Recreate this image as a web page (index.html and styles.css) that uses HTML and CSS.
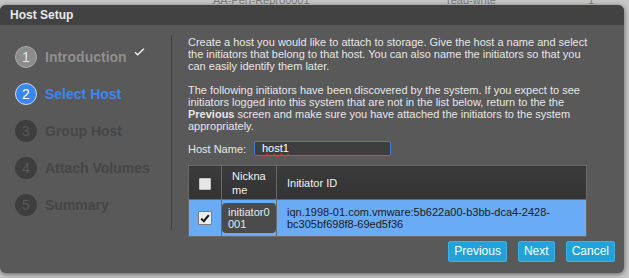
FILE: index.html
```html
<!DOCTYPE html>
<html lang="en">
<head>
<meta charset="utf-8">
<title>Host Setup</title>
<link rel="stylesheet" href="styles.css">
</head>
<body>
<div class="backdrop">
  <div class="bg-row">
    <span class="bg-name">AA-Perf-Repro0001</span>
    <span class="bg-access">read-write</span>
    <span class="bg-lun">1</span>
  </div>
</div>

<div class="dialog">
  <div class="dialog-title">Host Setup</div>
  <div class="dialog-body">
    <ol class="steps">
      <li class="step done"><span class="num">1</span><span class="label">Introduction</span><svg class="tick" width="11" height="8" viewBox="0 0 11 8"><path d="M1 4.2 L3.6 6.8 L10 0.8" fill="none" stroke="#f2f2f2" stroke-width="1.3"/></svg></li>
      <li class="step current"><span class="num">2</span><span class="label">Select Host</span></li>
      <li class="step todo"><span class="num">3</span><span class="label">Group Host</span></li>
      <li class="step todo"><span class="num">4</span><span class="label">Attach Volumes</span></li>
      <li class="step todo"><span class="num">5</span><span class="label">Summary</span></li>
    </ol>
    <div class="content">
      <p class="intro">Create a host you would like to attach to storage. Give the host a name and select the initiators that belong to that host. You can also name the initiators so that you can easily identify them later.</p>
      <p class="note">The following initiators have been discovered by the system. If you expect to see initiators logged into this system that are not in the list below, return to the the <b>Previous</b> screen and make sure you have attached the initiators to the system appropriately.</p>
      <div class="field">
        <span class="field-label">Host Name:</span>
        <div class="text-input"><span class="typed">host1</span></div>
      </div>
      <table class="initiators">
        <colgroup><col class="c-check"><col class="c-nick"><col class="c-id"></colgroup>
        <thead>
          <tr>
            <th class="th-check"><span class="box"></span></th>
            <th class="th-nick">Nickname</th>
            <th>Initiator ID</th>
          </tr>
        </thead>
        <tbody>
          <tr class="selected">
            <td class="td-check"><span class="box checked"><svg width="10" height="9" viewBox="0 0 10 9"><path d="M1.2 4.6 L3.8 7.2 L8.8 1.2" fill="none" stroke="#151515" stroke-width="2"/></svg></span></td>
            <td class="td-nick"><div class="nick-box">initiator0001</div></td>
            <td class="td-id">iqn.1998-01.com.vmware:5b622a00-b3bb-dca4-2428-bc305bf698f8-69ed5f36</td>
          </tr>
        </tbody>
      </table>
    </div>
  </div>
  <div class="dialog-footer">
    <button class="btn">Previous</button>
    <button class="btn">Next</button>
    <button class="btn">Cancel</button>
  </div>
</div>
</body>
</html>
```

FILE: styles.css
```css
html, body {
  margin: 0;
  padding: 0;
}
body {
  width: 629px;
  height: 278px;
  overflow: hidden;
  background: #c6c6c6;
  font-family: "Liberation Sans", Arial, sans-serif;
  position: relative;
}

.backdrop {
  height: 278px;
}
.bg-row {
  display: grid;
  grid-template-columns: 234px 141px auto;
  padding-left: 213px;
  margin-top: -6px;
  height: 12px;
  line-height: 12px;
  font-size: 11px;
  color: #7c7c7c;
}

.dialog {
  position: absolute;
  left: 0;
  top: 5px;
  width: 624px;
  height: 268px;
  background: #595959;
  border-radius: 6px;
  box-shadow: 0 1px 5px rgba(0, 0, 0, 0.55);
  color: #e6e6e6;
}

.dialog-title {
  height: 20px;
  line-height: 20px;
  padding-left: 10px;
  background: #424242;
  border-radius: 6px 6px 0 0;
  font-size: 12px;
  font-weight: bold;
  color: #e8e8e8;
}

.dialog-body {
  display: flex;
  padding-top: 10px;
  height: 195px;
}

.steps {
  list-style: none;
  margin: 0;
  padding: 3px 0 0 15px;
  width: 156px;
  border-right: 1px solid #3f3f3f;
}
.step {
  display: flex;
  align-items: center;
  height: 37px;
  font-size: 14px;
}
.step .num {
  box-sizing: border-box;
  width: 22px;
  height: 22px;
  border-radius: 50%;
  display: flex;
  align-items: center;
  justify-content: center;
  font-size: 14px;
  margin-right: 8px;
}
.step .label {
  font-weight: bold;
}
.step.done .num {
  background: #8c8c8c;
  border: 1.5px solid #a9a9a9;
  color: #e4e4e4;
}
.step.done .label {
  color: #8e8e8e;
}
.step .tick {
  align-self: flex-start;
  margin: 10px 0 0 7px;
}
.step.current .num {
  background: #3a86f0;
  border: 1.5px solid #cdd9ec;
  color: #ffffff;
}
.step.current .label {
  color: #3b87f2;
}
.step.todo .num {
  background: #3e3e3e;
  color: #575757;
}
.step.todo .label {
  color: #464646;
}

.content {
  width: 402px;
  padding: 1px 0 0 16px;
  font-size: 11px;
  line-height: 12px;
  color: #e6e6e6;
}
.content p {
  margin: 0 0 12px;
}
.content p.note {
  margin-bottom: 9px;
}

.field {
  display: flex;
  align-items: center;
  gap: 8px;
  height: 15px;
}
.field-label {
  flex: 0 0 auto;
  width: 58px;
  white-space: nowrap;
  color: #e6e6e6;
}
.text-input {
  flex: 0 0 auto;
  box-sizing: border-box;
  width: 137px;
  height: 15px;
  border: 1px solid #3c7cd4;
  border-radius: 2px;
  background: #3e3e3e;
  padding-left: 7px;
  line-height: 13px;
  color: #ffffff;
}
.typed {
  text-decoration: underline wavy #e0302a;
  text-decoration-thickness: 1px;
  text-underline-offset: 1px;
}

.initiators {
  margin-top: 9px;
  width: 399px;
  border-collapse: collapse;
  table-layout: fixed;
  font-size: 11px;
}
.c-check { width: 33px; }
.c-nick { width: 55px; }

.initiators th {
  height: 33px;
  padding: 0 10px;
  border: 1px solid #6a6a6a;
  background: linear-gradient(#3b3b3b, #333333);
  color: #f2f2f2;
  font-weight: normal;
  text-align: left;
  line-height: 14px;
}
.initiators th.th-nick {
  word-break: break-all;
}
.initiators th.th-check,
.initiators td.td-check {
  padding: 0;
  text-align: center;
}
.box {
  display: inline-flex;
  align-items: center;
  justify-content: center;
  box-sizing: border-box;
  width: 12px;
  height: 12px;
  vertical-align: middle;
  background: #e6e6e6;
  border: 1px solid #c4c4c4;
  border-radius: 1px;
}
.box.checked {
  width: 14px;
  height: 14px;
  border: 1px solid #7a7a7a;
  background: #ededed;
}

.initiators td {
  height: 30px;
  border: 1px solid #6a6a6a;
  background: #6aabf6;
  line-height: 12px;
  vertical-align: middle;
}
.initiators td.td-nick {
  padding: 0;
  height: 30px;
}
.nick-box {
  box-sizing: border-box;
  height: 30px;
  padding: 3px 6px;
  background: #4b4b4b;
  border-radius: 4px;
  color: #e8e8e8;
  word-break: break-all;
}
.initiators td.td-id {
  padding: 3px 10px;
  color: #1c1c1c;
}

.dialog-footer {
  display: flex;
  justify-content: flex-end;
  gap: 11px;
  padding: 11px 9px 0 0;
}
.btn {
  height: 21px;
  padding: 0 5px;
  border: 1px solid #3db0e4;
  border-radius: 2px;
  background: #23a1d9;
  color: #ffffff;
  font-family: "Liberation Sans", Arial, sans-serif;
  font-size: 12px;
  line-height: 19px;
}
```
